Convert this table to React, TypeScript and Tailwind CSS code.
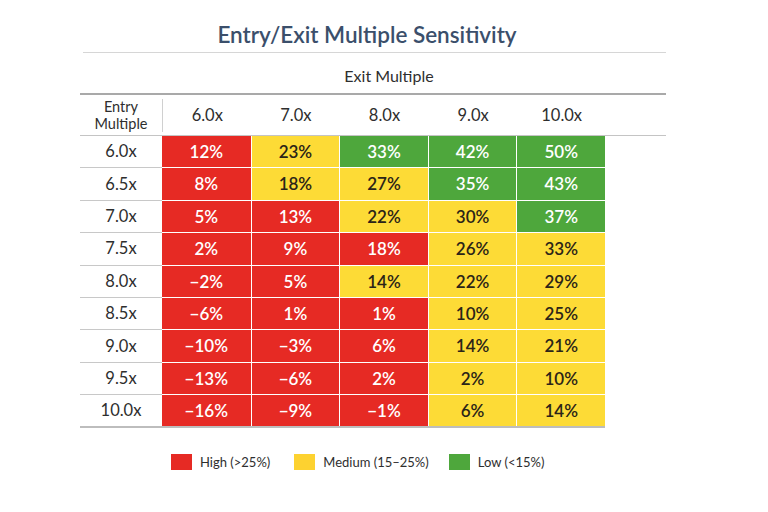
import React from "react";

type Level = "high" | "med" | "low";

const exits = ["6.0x", "7.0x", "8.0x", "9.0x", "10.0x"];

// rows of [entry, values...] — level is picked by hand from the reference
const rows: { entry: string; cells: [string, Level][] }[] = [
    { entry: "6.0x", cells: [["12%", "high"], ["23%", "med"], ["33%", "low"], ["42%", "low"], ["50%", "low"]] },
    { entry: "6.5x", cells: [["8%", "high"], ["18%", "med"], ["27%", "med"], ["35%", "low"], ["43%", "low"]] },
    { entry: "7.0x", cells: [["5%", "high"], ["13%", "high"], ["22%", "med"], ["30%", "med"], ["37%", "low"]] },
    { entry: "7.5x", cells: [["2%", "high"], ["9%", "high"], ["18%", "high"], ["26%", "med"], ["33%", "med"]] },
    { entry: "8.0x", cells: [["-2%", "high"], ["5%", "high"], ["14%", "med"], ["22%", "med"], ["29%", "med"]] },
    { entry: "8.5x", cells: [["-6%", "high"], ["1%", "high"], ["1%", "high"], ["10%", "med"], ["25%", "med"]] },
    { entry: "9.0x", cells: [["-10%", "high"], ["-3%", "high"], ["6%", "high"], ["14%", "med"], ["21%", "med"]] },
    { entry: "9.5x", cells: [["-13%", "high"], ["-6%", "high"], ["2%", "high"], ["2%", "med"], ["10%", "med"]] },
    { entry: "10.0x", cells: [["-16%", "high"], ["-9%", "high"], ["-1%", "high"], ["6%", "med"], ["14%", "med"]] },
];

const cellStyle: Record<Level, string> = {
    high: "bg-[#e62a24] text-white",
    med: "bg-[#fddb36] text-[#2b2418]",
    low: "bg-[#4ea73c] text-white",
};

const App = () => {
    return (
        <div className="w-[768px] h-[512px] bg-white font-['Lato',sans-serif] text-[#2e2e2e]">
            <div className="ml-[80px] w-[586px] pt-[20px]">
                {/* Title */}
                <h1 className="pr-[12px] text-center text-[22.5px] font-semibold leading-[30px] text-[#3b4f6b]">
                    Entry/Exit Multiple Sensitivity
                </h1>
                <div className="ml-[3px] mt-[2px] h-px bg-[#d6d6d6]" />
                <div className="flex h-[40px] items-center pt-[5px] pl-[82px] pr-[50px]">
                    <span className="w-full text-center text-[16px]">Exit Multiple</span>
                </div>
                <div className="h-[2px] bg-[#a9a9a9]" />

                {/* Column headers */}
                <div className="flex h-[41px] items-center border-b border-[#c4c4c4]">
                    <div className="w-[82px] text-center text-[14.5px] leading-[17px]">
                        Entry
                        <br />
                        Multiple
                    </div>
                    <div className="h-[33px] w-px bg-[#d0d0d0]" />
                    {exits.map((e) => (
                        <div key={e} className="w-[88.6px] text-center text-[16.5px]">
                            {e}
                        </div>
                    ))}
                </div>

                {/* Body */}
                <div className="w-[525px]">
                    {rows.map((r, i) => (
                        <div
                            key={r.entry}
                            className={
                                "flex h-[32.4px] " +
                                (i === rows.length - 1 ? "border-b-2 border-[#bdbdbd]" : "")
                            }
                        >
                            <div
                                className={
                                    "flex w-[82px] items-center justify-center text-[16.5px] " +
                                    (i === rows.length - 1 ? "" : "border-b border-[#c8c8c8]")
                                }
                            >
                                {r.entry}
                            </div>
                            {r.cells.map(([v, lvl], j) => (
                                <div
                                    key={j}
                                    className={
                                        "flex w-[88.6px] items-center justify-center text-[17px] font-semibold " +
                                        (j > 0 ? "border-l border-white " : "") +
                                        (i === rows.length - 1 ? "" : "border-b border-white ") +
                                        cellStyle[lvl]
                                    }
                                >
                                    {v.replace("-", "\u2212")}
                                </div>
                            ))}
                        </div>
                    ))}
                </div>

                {/* Legend */}
                <div className="mt-[25px] flex items-center pl-[91px] text-[13px]">
                    <span className="h-[16px] w-[21px] bg-[#e62a24]" />
                    <span className="ml-[8px]">High (&gt;25%)</span>
                    <span className="ml-[24px] h-[16px] w-[21px] bg-[#fdd230]" />
                    <span className="ml-[8px]">Medium (15–25%)</span>
                    <span className="ml-[20px] h-[16px] w-[21px] bg-[#4ea73c]" />
                    <span className="ml-[8px]">Low (&lt;15%)</span>
                </div>
            </div>
        </div>
    );
};

export default App;
